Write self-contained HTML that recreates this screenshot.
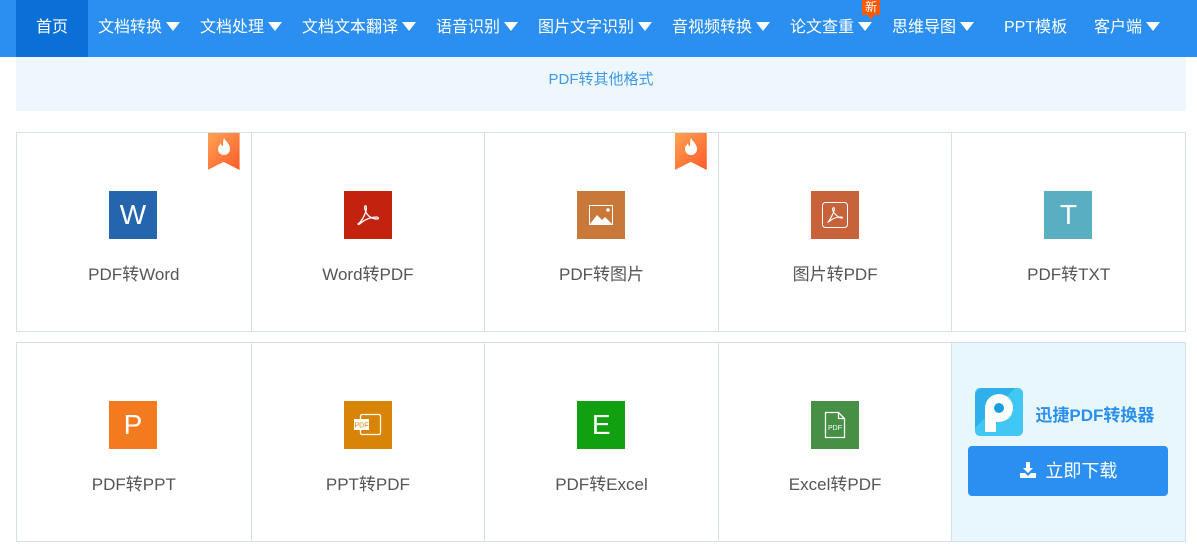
<!DOCTYPE html>
<html><head><meta charset="utf-8"><style>
*{margin:0;padding:0;box-sizing:border-box}
body{width:1197px;height:554px;background:#fff;font-family:"Liberation Sans","Noto Sans CJK SC",sans-serif;position:relative;overflow:hidden}
.nav{position:absolute;left:0;top:0;width:1197px;height:57px;background:#2a8ff0}
.nav .it{position:absolute;top:0;height:57px;line-height:55px;color:#fff;font-size:16px;white-space:nowrap}
.tri{display:inline-block;width:0;height:0;border-left:7px solid transparent;border-right:7px solid transparent;border-top:9px solid #fff;margin-left:4px;vertical-align:1px}
.home{left:16px;width:72px;background:#0a6fd6;text-align:center}
.new{position:absolute;left:862px;top:0;background:#ff5a00;color:#fff;font-size:12px;line-height:15px;padding:0 3px;height:15px}
.new:after{content:"";position:absolute;left:6px;bottom:-5px;border-left:3px solid transparent;border-right:3px solid transparent;border-top:5px solid #ff5a00}
.sub{position:absolute;left:16px;top:57px;width:1170px;height:54px;background:#eef6fe;color:#3f9ae6;font-size:15px;text-align:center;line-height:45px}
.row{position:absolute;left:16px;width:1170px;height:200px;border:1px solid #d5e0e6;display:flex}
.cell{width:234px;height:100%;border-left:1px solid #d5e0e6;position:relative}
.cell:first-child{border-left:none}
.ic{position:absolute;left:92px;top:58px;width:48px;height:48px;color:#fff;font-size:28px;text-align:center;line-height:48px;font-weight:300}
.lb{position:absolute;left:0;right:0;top:127px;text-align:center;font-size:17px;color:#555}
.hot{position:absolute;right:11px;top:0;width:32px;height:37px;background:linear-gradient(135deg,#ffa253,#ff5a2a);clip-path:polygon(0 0,100% 0,100% 100%,50% 78%,0 100%)}
.hot svg{position:absolute;left:7px;top:4px}
.dl{background:#e8f7fd}
.btn{position:absolute;left:16px;top:103px;width:200px;height:50px;background:#2a8ff0;border-radius:4px;color:#fff;font-size:18px;text-align:center;line-height:50px}
</style></head><body>
<div class="nav">
<div class="it home">首页</div>
<div class="it" style="left:98px">文档转换<span class="tri"></span></div>
<div class="it" style="left:200px">文档处理<span class="tri"></span></div>
<div class="it" style="left:302px">文档文本翻译<span class="tri"></span></div>
<div class="it" style="left:436px">语音识别<span class="tri"></span></div>
<div class="it" style="left:538px">图片文字识别<span class="tri"></span></div>
<div class="it" style="left:672px">音视频转换<span class="tri"></span></div>
<div class="it" style="left:790px">论文查重<span class="tri"></span></div>
<div class="it" style="left:892px">思维导图<span class="tri"></span></div>
<div class="it" style="left:1004px">PPT模板</div>
<div class="it" style="left:1094px">客户端<span class="tri"></span></div>
<div class="new">新</div>
</div>
<div class="sub">PDF转其他格式</div>
<div class="row" style="top:132px">
<div class="cell"><div class="hot"><svg width="18" height="20" viewBox="0 0 18 20"><path d="M9 1C11 5 15 7 15 12a6 6 0 0 1-12 0c0-3 2-4 3-6 0 2 1 3 2 3 0-3 0-5 1-8z" fill="#fff"/></svg></div><div class="ic" style="background:#2565ae">W</div><div class="lb">PDF转Word</div></div>
<div class="cell"><div class="ic" style="background:#c3220f"><svg width="48" height="48" viewBox="0 0 48 48"><path d="M14 33c3-2 6-7 8-13 1-4 0-6-1-5s0 5 2 8c2 3 6 5 10 5 2 0 2-2-1-2-4 0-10 2-14 5-2 2-4 3-4 2z" fill="none" stroke="#fff" stroke-width="1.3"/></svg></div><div class="lb">Word转PDF</div></div>
<div class="cell"><div class="hot"><svg width="18" height="20" viewBox="0 0 18 20"><path d="M9 1C11 5 15 7 15 12a6 6 0 0 1-12 0c0-3 2-4 3-6 0 2 1 3 2 3 0-3 0-5 1-8z" fill="#fff"/></svg></div><div class="ic" style="background:#c87839"><svg width="48" height="48" viewBox="0 0 48 48"><rect x="12.5" y="14.5" width="23" height="19" fill="none" stroke="#fff"/><path d="M13 33l7-9 5 5 3-3 7 7z" fill="#fff"/><circle cx="31" cy="19" r="1.8" fill="#fff"/></svg></div><div class="lb">PDF转图片</div></div>
<div class="cell"><div class="ic" style="background:#c7623a"><svg width="48" height="48" viewBox="0 0 48 48"><rect x="11.5" y="11.5" width="25" height="25" rx="3" fill="none" stroke="#fff"/><path d="M17 31c2-2 4-6 6-11 1-3 0-4-1-3s0 4 2 6c2 2 4 4 7 4 1 0 1-1-1-1-3 0-7 1-10 3-2 2-3 2-3 2z" fill="none" stroke="#fff" stroke-width="1.1"/></svg></div><div class="lb">图片转PDF</div></div>
<div class="cell"><div class="ic" style="background:#5aaec2">T</div><div class="lb">PDF转TXT</div></div>
</div>
<div class="row" style="top:342px">
<div class="cell"><div class="ic" style="background:#f47a20">P</div><div class="lb">PDF转PPT</div></div>
<div class="cell"><div class="ic" style="background:#d88406"><svg width="48" height="48" viewBox="0 0 48 48"><rect x="16.5" y="13.5" width="20" height="20" rx="1.5" fill="none" stroke="#fff" stroke-width="1.3"/><rect x="10" y="18" width="15" height="11" fill="#fff"/><text x="17.5" y="26.5" font-size="7" fill="#d88406" text-anchor="middle" font-family="Liberation Sans">PDF</text></svg></div><div class="lb">PPT转PDF</div></div>
<div class="cell"><div class="ic" style="background:#11a110">E</div><div class="lb">PDF转Excel</div></div>
<div class="cell"><div class="ic" style="background:#468f45"><svg width="48" height="48" viewBox="0 0 48 48"><path d="M14.5 11.5h13l6 6v19h-19z M27.5 11.5v6h6" fill="none" stroke="#fff" stroke-width="1.3"/><text x="24" y="29" font-size="7" fill="#fff" text-anchor="middle" font-family="Liberation Sans">PDF</text></svg></div><div class="lb">Excel转PDF</div></div>
<div class="cell dl">
<svg style="position:absolute;left:23px;top:45px" width="48" height="48" viewBox="0 0 48 48"><rect width="48" height="48" rx="5" fill="#41c7f3"/><path d="M0 8a8 8 0 0 1 8-8h32L0 40z" fill="#2fb0ea"/><path d="M10 44V20a14 14 0 1 1 14 14h-3v10z" fill="#fff"/><circle cx="24" cy="20" r="5" fill="#1b9ee0"/></svg>
<div style="position:absolute;left:83px;top:58px;font-size:17px;font-weight:bold;color:#2a8ff0">迅捷PDF转换器</div>
<div class="btn"><svg width="18" height="18" viewBox="0 0 18 18" style="vertical-align:-2px;margin-right:8px"><path d="M7 1h4v6h3l-5 5-5-5h3z M1 12h5l3 3 3-3h5v5H1z" fill="#fff"/></svg>立即下载</div>
</div>
</div>
</body></html>
